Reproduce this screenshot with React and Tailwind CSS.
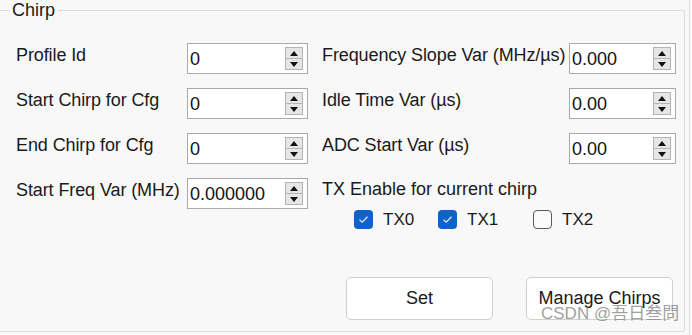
import React from 'react';

const font = { fontFamily: '"Liberation Sans", Arial, "Noto Sans CJK SC", sans-serif' };

const SpinInput = ({ value, width }) => (
  <div className={`relative ${width} h-[31px] bg-white border border-[#a9a9a9] flex items-center`}>
    <span className="pl-[2px] text-[18px] leading-none text-[#111]">{value}</span>
    <div className="absolute right-[4px] top-[3px] w-[18px] h-[23px] flex flex-col border border-[#b4b4b4] bg-[#e6e6e6]">
      <div className="flex-1 flex items-center justify-center border-b border-[#b4b4b4]">
        <svg width="8" height="5" viewBox="0 0 8 5"><path d="M0 5 L4 0 L8 5 Z" fill="#111" /></svg>
      </div>
      <div className="flex-1 flex items-center justify-center">
        <svg width="8" height="5" viewBox="0 0 8 5"><path d="M0 0 L4 5 L8 0 Z" fill="#111" /></svg>
      </div>
    </div>
  </div>
);

const Row = ({ label, value, labelW, inputW }) => (
  <div className="flex items-start h-[31px]">
    <div className={`${labelW} text-[18px] leading-[22px] pt-[1px] text-[#1a1a1a] whitespace-nowrap tracking-[-0.1px]`}>{label}</div>
    <SpinInput value={value} width={inputW} />
  </div>
);

const Check = ({ checked, label, className }) => (
  <div className={`flex items-center gap-[10px] ${className}`}>
    {checked ? (
      <div className="w-[19px] h-[19px] rounded-[4px] bg-[#0f62c8] flex items-center justify-center">
        <svg width="11" height="9" viewBox="0 0 11 9"><path d="M1.5 4.8 L4.2 7.2 L9.5 1.8" stroke="#dce8f8" strokeWidth="1.3" fill="none" /></svg>
      </div>
    ) : (
      <div className="w-[19px] h-[19px] rounded-[4px] bg-[#fbfbfb] border border-[#5a5a5a]" />
    )}
    <span className="text-[17px] leading-none text-[#1a1a1a]">{label}</span>
  </div>
);

export default function App() {
  return (
    <div className="relative w-[692px] h-[335px] bg-[#f8f8f8] overflow-hidden" style={font}>
      <div className="absolute right-[2px] top-0 bottom-0 w-[1px] bg-[#e2e2e2]" />
      <fieldset className="ml-[-1px] w-[686px] h-[332px] border border-[#dcdcdc] rounded-[2px]">
        <legend className="ml-[9px] px-[3px] text-[18px] leading-[20px] text-[#1a1a1a]">Chirp</legend>
        <div className="flex pl-[16px] pt-[23px]">
          <div className="flex flex-col gap-[14px] w-[306px]">
            <Row label="Profile Id" value="0" labelW="w-[171px]" inputW="w-[121px]" />
            <Row label="Start Chirp for Cfg" value="0" labelW="w-[171px]" inputW="w-[121px]" />
            <Row label="End Chirp for Cfg" value="0" labelW="w-[171px]" inputW="w-[121px]" />
            <Row label="Start Freq Var (MHz)" value="0.000000" labelW="w-[171px]" inputW="w-[121px]" />
          </div>
          <div className="flex flex-col">
            <div className="flex flex-col gap-[14px]">
              <Row label="Frequency Slope Var (MHz/µs)" value="0.000" labelW="w-[247px]" inputW="w-[107px]" />
              <Row label="Idle Time Var (µs)" value="0.00" labelW="w-[247px]" inputW="w-[107px]" />
              <Row label="ADC Start Var (µs)" value="0.00" labelW="w-[247px]" inputW="w-[107px]" />
            </div>
            <div className="mt-[14px] text-[18px] leading-[22px] text-[#1a1a1a]">TX Enable for current chirp</div>
            <div className="flex mt-[10px] pl-[32px]">
              <Check checked label="TX0" className="w-[84px]" />
              <Check checked label="TX1" className="w-[95px]" />
              <Check label="TX2" />
            </div>
            <div className="flex gap-[33px] mt-[48px] pl-[24px]">
              <button className="w-[147px] h-[43px] bg-white border border-[#cfcfcf] rounded-[5px] text-[18px] text-[#1a1a1a]">Set</button>
              <button className="w-[147px] h-[43px] bg-white border border-[#cfcfcf] rounded-[5px] text-[18px] text-[#1a1a1a]">Manage Chirps</button>
            </div>
          </div>
        </div>
      </fieldset>
      <div className="absolute left-[541px] top-[305px] text-[17px] leading-none text-[#8a8a8a] opacity-80 whitespace-nowrap" style={{ fontFamily: '"Liberation Sans", "Noto Sans CJK TC", sans-serif' }}>CSDN @吾日叁問</div>
    </div>
  );
}
